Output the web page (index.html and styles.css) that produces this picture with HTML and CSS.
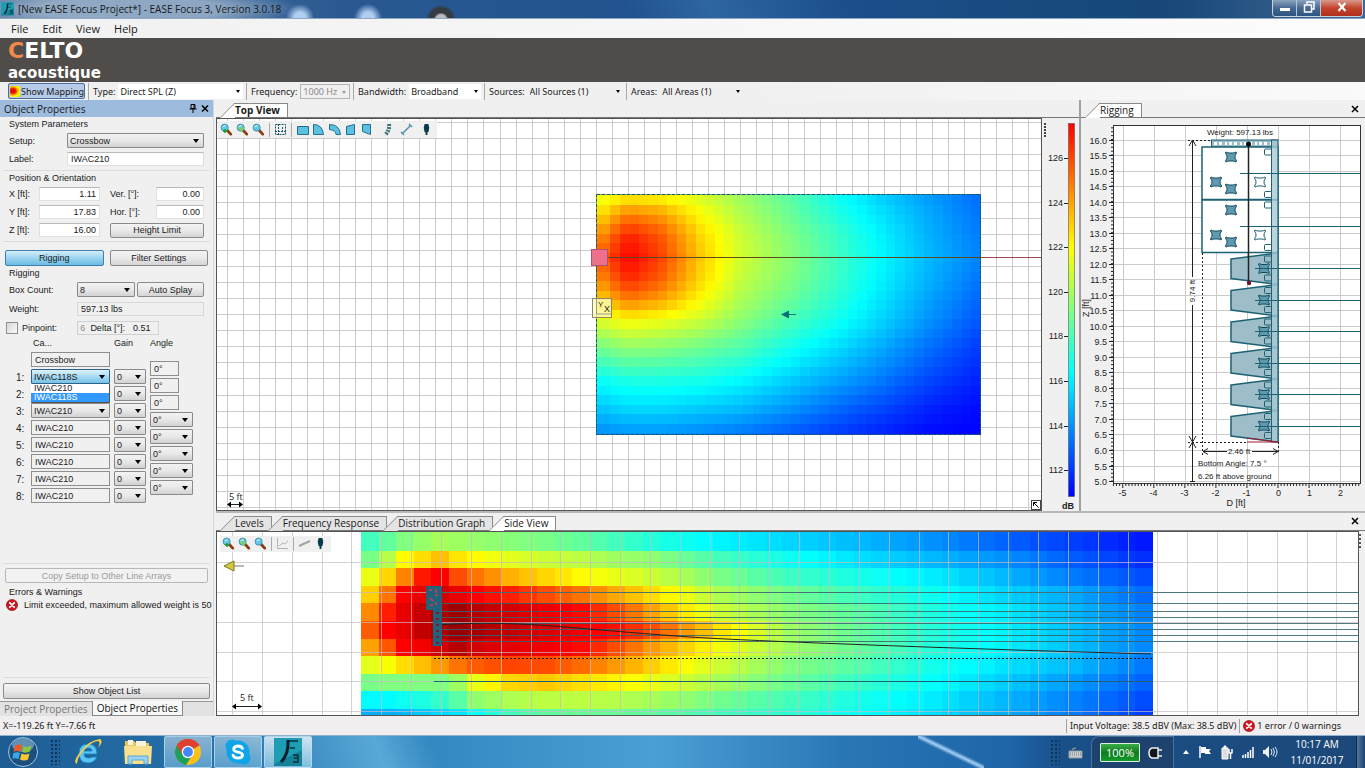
FILE: index.html
```html
<!DOCTYPE html>
<html lang="en">
<head>
  <meta charset="UTF-8">
  <title>[New EASE Focus Project*] - EASE Focus 3, Version 3.0.18</title>
  <link rel="stylesheet" href="styles.css">
</head>
<body>

  <!-- Shared icons -->
  <svg class="sprite" aria-hidden="true">
    <symbol id="mag" viewBox="0 0 14 14">
      <path d="M7.500 7.500l4 4.500" stroke="#8c3a12" stroke-width="3" stroke-linecap="round"/>
      <circle cx="5" cy="5" r="3.800" fill="#63c8e6" stroke="#3c8fa8"/>
      <path d="M3 4.500q1-2 3-1.500" stroke="#fff" fill="none"/>
    </symbol>
    <symbol id="error" viewBox="0 0 12 12">
      <circle cx="6" cy="6" r="5.600" fill="#cf1420" stroke="#8e0b12" stroke-width=".6"/>
      <path d="M3.800 3.800l4.400 4.400M8.200 3.800l-4.400 4.400" stroke="#fff" stroke-width="1.800" stroke-linecap="round"/>
    </symbol>
    <symbol id="ease" viewBox="0 0 28 28">
      <rect width="28" height="28" fill="#14839a"/>
      <path d="M0 0h28v12L0 26z" fill="#1f9db4"/>
      <path d="M14 2q1 14-7 22" stroke="#06212c" stroke-width="3" fill="none"/>
      <path d="M15 3h9M16 10h5M19 17h5v7h-5M20 20h4" stroke="#06303c" stroke-width="1.500" fill="none"/>
    </symbol>
    <symbol id="pin" viewBox="0 0 8 14">
      <path d="M2 1h4l1 4-1 5H5v3H3v-3H2L1 5z" fill="#073b4c"/>
    </symbol>
  </svg>

  <header class="titlebar">
    <svg class="app-icon"><use href="#ease"/></svg>
    <span class="app-title">[New EASE Focus Project*] - EASE Focus 3, Version 3.0.18</span>
    <div class="window-buttons">
      <button aria-label="Minimize"><svg width="12" height="12"><path d="M1 7h10v3H1z" fill="#fff"/></svg></button>
      <button aria-label="Restore"><svg width="12" height="12"><path d="M4 3V1h7v7H9M1.500 4h7v7h-7z" fill="none" stroke="#fff" stroke-width="1.500"/></svg></button>
      <button class="close" aria-label="Close"><svg width="12" height="12"><path d="M2.500 2l7 8M9.500 2l-7 8" stroke="#fff" stroke-width="2.200"/></svg></button>
    </div>
  </header>

  <nav class="menu">
    <a href="#">File</a>
    <a href="#">Edit</a>
    <a href="#">View</a>
    <a href="#">Help</a>
  </nav>

  <div class="banner">
    <div class="brand"><span class="brand-c">C</span>ELTO</div>
    <div class="brand-sub">acoustique</div>
  </div>

  <!-- Mapping toolbar -->
  <div class="toolbar">
    <button class="mapping-button"><span class="heat-swatch"></span>Show Mapping</button>
    <div class="tool-field type">
      <label for="type">Type:</label>
      <span class="picker"><select id="type"><option>Direct SPL (Z)</option></select></span>
    </div>
    <div class="tool-field frequency">
      <label for="frequency">Frequency:</label>
      <span class="picker off"><select id="frequency" disabled><option>1000 Hz</option></select></span>
    </div>
    <div class="tool-field bandwidth">
      <label for="bandwidth">Bandwidth:</label>
      <span class="picker"><select id="bandwidth"><option>Broadband</option></select></span>
    </div>
    <div class="tool-field sources">
      <label for="sources">Sources:</label>
      <span class="picker plain"><select id="sources"><option>All Sources (1)</option></select></span>
    </div>
    <div class="tool-field areas">
      <label for="areas">Areas:</label>
      <span class="picker plain"><select id="areas"><option>All Areas (1)</option></select></span>
    </div>
  </div>

  <main class="main">

    <!-- Object properties -->
    <aside class="side">
      <div class="side-head">
        <span>Object Properties</span>
        <button aria-label="Pin"><svg width="8" height="9"><path d="M2 .5h4v4H2zM5 1v4M.5 5h7M4 5v4" fill="none" stroke="#000"/></svg></button>
        <button aria-label="Close panel"><svg width="8" height="9"><path d="M1 1.500l6 6M7 1.500l-6 6" stroke="#000" stroke-width="1.500"/></svg></button>
      </div>

      <div class="props">
        <section class="group">
          <h2>System Parameters</h2>
          <div class="row tall">
            <label class="name-wide" for="setup">Setup:</label>
            <span class="combo grow"><select id="setup"><option>Crossbow</option></select></span>
          </div>
          <div class="row">
            <label class="name-wide" for="label">Label:</label>
            <input class="grow" id="label" type="text" value="IWAC210">
          </div>
        </section>

        <section class="group">
          <h2>Position &amp; Orientation</h2>
          <div class="row">
            <label class="name-short" for="x">X [ft]:</label>
            <input class="num" id="x" type="text" value="1.11">
            <label class="name-mid" for="ver">Ver. [°]:</label>
            <input class="num-small" id="ver" type="text" value="0.00">
          </div>
          <div class="row">
            <label class="name-short" for="y">Y [ft]:</label>
            <input class="num" id="y" type="text" value="17.83">
            <label class="name-mid" for="hor">Hor. [°]:</label>
            <input class="num-small" id="hor" type="text" value="0.00">
          </div>
          <div class="row">
            <label class="name-short" for="z">Z [ft]:</label>
            <input class="num" id="z" type="text" value="16.00">
            <button class="btn grow height-limit">Height Limit</button>
          </div>
        </section>

        <div class="mode-tabs">
          <button class="btn active">Rigging</button>
          <button class="btn">Filter Settings</button>
        </div>

        <section class="group rigging">
          <h2>Rigging</h2>
          <div class="row tall">
            <label class="name-rig" for="boxes">Box Count:</label>
            <span class="combo boxes"><select id="boxes"><option>8</option></select></span>
            <button class="btn grow">Auto Splay</button>
          </div>
          <div class="row tall">
            <label class="name-rig" for="weight">Weight:</label>
            <input class="grow flat" id="weight" type="text" value="597.13 lbs" readonly>
          </div>
          <div class="row tall pinpoint">
            <input id="pinpoint" type="checkbox">
            <label for="pinpoint">Pinpoint:</label>
            <div class="delta">
              <span class="dim">6</span>
              <label for="delta">Delta [°]:</label>
              <input id="delta" type="text" value="0.51" readonly>
            </div>
          </div>

          <div class="cabinets">
            <div class="cab-col cab-index">
              <span>1:</span><span>2:</span><span>3:</span><span>4:</span><span>5:</span><span>6:</span><span>7:</span><span>8:</span>
            </div>
            <div class="cab-col cab-type">
              <h3>Ca...</h3>
              <input type="text" value="Crossbow" aria-label="Frame" readonly>
              <span class="combo open"><select aria-label="Cabinet 1"><option>IWAC118S</option></select></span>
              <ul class="cab-list">
                <li>IWAC210</li>
                <li class="picked">IWAC118S</li>
              </ul>
              <span class="combo"><select aria-label="Cabinet 2"><option></option></select></span>
              <span class="combo"><select aria-label="Cabinet 3"><option>IWAC210</option></select></span>
              <input type="text" value="IWAC210" aria-label="Cabinet 4" readonly>
              <input type="text" value="IWAC210" aria-label="Cabinet 5" readonly>
              <input type="text" value="IWAC210" aria-label="Cabinet 6" readonly>
              <input type="text" value="IWAC210" aria-label="Cabinet 7" readonly>
              <input type="text" value="IWAC210" aria-label="Cabinet 8" readonly>
            </div>
            <div class="cab-col cab-gain">
              <h3>Gain</h3>
              <span class="combo"><select aria-label="Gain 1"><option>0</option></select></span>
              <span class="combo"><select aria-label="Gain 2"><option>0</option></select></span>
              <span class="combo"><select aria-label="Gain 3"><option>0</option></select></span>
              <span class="combo"><select aria-label="Gain 4"><option>0</option></select></span>
              <span class="combo"><select aria-label="Gain 5"><option>0</option></select></span>
              <span class="combo"><select aria-label="Gain 6"><option>0</option></select></span>
              <span class="combo"><select aria-label="Gain 7"><option>0</option></select></span>
              <span class="combo"><select aria-label="Gain 8"><option>0</option></select></span>
            </div>
            <div class="cab-col cab-angle">
              <h3>Angle</h3>
              <input type="text" value="0°" aria-label="Angle 1" readonly>
              <input type="text" value="0°" aria-label="Angle 2" readonly>
              <input type="text" value="0°" aria-label="Angle 3" readonly>
              <span class="combo"><select aria-label="Angle 4"><option>0°</option></select></span>
              <span class="combo"><select aria-label="Angle 5"><option>0°</option></select></span>
              <span class="combo"><select aria-label="Angle 6"><option>0°</option></select></span>
              <span class="combo"><select aria-label="Angle 7"><option>0°</option></select></span>
              <span class="combo"><select aria-label="Angle 8"><option>0°</option></select></span>
            </div>
          </div>
        </section>

        <button class="btn copy" disabled>Copy Setup to Other Line Arrays</button>

        <section class="group errors">
          <h2>Errors &amp; Warnings</h2>
          <p><svg width="12" height="12"><use href="#error"/></svg><span>Limit exceeded, maximum allowed weight is 503</span></p>
        </section>
      </div>

      <button class="btn object-list">Show Object List</button>
      <div class="side-tabs">
        <a href="#">Project Properties</a>
        <a class="active" href="#">Object Properties</a>
      </div>
    </aside>

    <div class="views">
      <!-- Top view -->
      <section class="view top-view">
        <div class="tabs"><a class="tab active bold" href="#">Top View</a></div>
        <div class="view-body">
          <div class="plot">
            <svg id="top-plot" class="plot-svg"></svg>
            <div class="plot-tools">
              <button aria-label="Zoom in"><svg width="13" height="13"><use href="#mag"/><path d="M3 8h4M5 6v4" stroke="#1e9b2e" stroke-width="1.500"/></svg></button>
              <button aria-label="Zoom window"><svg width="13" height="13"><use href="#mag"/><path d="M2 5q3-3 6 1l-3 3z" fill="#7ad06a"/></svg></button>
              <button aria-label="Zoom out"><svg width="13" height="13"><use href="#mag"/></svg></button>
              <i class="sep"></i>
              <button aria-label="Show grid"><svg width="13" height="13"><path d="M1.500 1.500h10v10h-10zM4.500 1v11M1 8.500h11M8.500 4v4" fill="none" stroke="#14566a" stroke-dasharray="2 1"/></svg></button>
              <i class="sep"></i>
              <button aria-label="Rectangle area"><svg width="13" height="13"><path d="M1.500 3.500h11v8h-11z" class="area"/></svg></button>
              <button aria-label="Arc area"><svg width="13" height="13"><path d="M1.500 1.500q9 0 10 10h-10z" class="area"/></svg></button>
              <button aria-label="Ring area"><svg width="13" height="13"><path d="M1.500 1.500q10 0 11 10H8q0-4-6.500-5z" class="area"/></svg></button>
              <button aria-label="Left trapezoid"><svg width="13" height="13"><path d="M2.500 3.500l8-2v10h-8z" class="area"/></svg></button>
              <button aria-label="Right trapezoid"><svg width="13" height="13"><path d="M2.500 1.500h8v10l-8-3z" class="area"/></svg></button>
              <button class="gap" aria-label="Line array"><svg width="13" height="13"><path d="M9 1q1 6-4 11" stroke="#43727e" stroke-width="4" fill="none" stroke-dasharray="2 1"/></svg></button>
              <button class="gap" aria-label="Measure"><svg width="13" height="13"><path d="M2 11l9-9M1 9l3 3M9 1l3 3" stroke="#4f8fac" stroke-width="1.500"/></svg></button>
              <button class="gap" aria-label="Probe"><svg width="13" height="13"><use href="#pin"/></svg></button>
            </div>
            <button class="corner" aria-label="Resize"><svg width="8" height="8"><path d="M1.500 5V1.500H5M1.500 1.500l5 5" stroke="#000" fill="none"/></svg></button>
          </div>
          <svg id="scale" class="scale"></svg>
        </div>
      </section>

      <!-- Rigging diagram -->
      <section class="view rig-view">
        <div class="tabs">
          <a class="tab active" href="#">Rigging</a>
          <button class="tab-close" aria-label="Close rigging"><svg width="8" height="8"><path d="M1 1l6 6M7 1l-6 6" stroke="#000" stroke-width="1.500"/></svg></button>
        </div>
        <svg id="rig-plot" class="plot-svg"></svg>
      </section>

      <!-- Side view -->
      <section class="view side-view">
        <div class="tabs">
          <a class="tab" href="#">Levels</a>
          <a class="tab" href="#">Frequency Response</a>
          <a class="tab" href="#">Distribution Graph</a>
          <a class="tab active" href="#">Side View</a>
          <button class="tab-close" aria-label="Close side view"><svg width="8" height="8"><path d="M1 1l6 6M7 1l-6 6" stroke="#000" stroke-width="1.500"/></svg></button>
        </div>
        <div class="view-body">
          <div class="plot">
            <svg id="side-plot" class="plot-svg"></svg>
            <div class="plot-tools lower">
              <button aria-label="Zoom in"><svg width="13" height="13"><use href="#mag"/><path d="M3 8h4M5 6v4" stroke="#1e9b2e" stroke-width="1.500"/></svg></button>
              <button aria-label="Zoom window"><svg width="13" height="13"><use href="#mag"/><path d="M2 5q3-3 6 1l-3 3z" fill="#7ad06a"/></svg></button>
              <button aria-label="Zoom out"><svg width="13" height="13"><use href="#mag"/></svg></button>
              <i class="sep"></i>
              <button aria-label="Axes"><svg width="13" height="13"><path d="M1.500 1v10.500H12M3 9l4-3 2 1 3-3" stroke="#b4b4b4" fill="none"/></svg></button>
              <i class="sep"></i>
              <button aria-label="Measure"><svg width="13" height="13"><path d="M1 9l11-5" stroke="#a4a4a4" stroke-width="2"/></svg></button>
              <button aria-label="Probe"><svg width="13" height="13"><use href="#pin"/></svg></button>
            </div>
          </div>
          <i class="drag-dots"></i>
        </div>
      </section>
    </div>
  </main>

  <footer class="status">
    <span class="coords">X=-119.26 ft Y=-7.66 ft</span>
    <span class="status-cell">Input Voltage: 38.5 dBV (Max: 38.5 dBV)</span>
    <span class="status-cell"><svg width="12" height="12"><use href="#error"/></svg>1 error / 0 warnings</span>
  </footer>

  <!-- Windows taskbar -->
  <div class="taskbar">
    <button class="start" aria-label="Start">
      <svg width="32" height="32" viewBox="0 0 32 32">
        <circle cx="16" cy="16" r="14.500" fill="#1c4f7c" stroke="#9cc6e4"/>
        <ellipse cx="16" cy="9" rx="11" ry="7" fill="#8fb9d8" opacity=".6"/>
        <path d="M8 10q4-2.500 7-.5l-1.500 6Q10 14 6.500 16z" fill="#ee5a24"/>
        <path d="M16.500 10q4 2 8-.5l-1.500 6q-4 2-8 .5z" fill="#8cc63e"/>
        <path d="M6 17.500q4-2 7-.5l-1.500 6Q8 21.500 5.500 23z" fill="#38a9e8"/>
        <path d="M14.500 17.500q4 2 8 0l-1.500 6q-4 2-8 0z" fill="#fcc62d"/>
      </svg>
    </button>
    <i class="grip"></i>
    <button class="task flat-task" aria-label="Internet Explorer">
      <svg width="30" height="30" viewBox="0 0 30 30">
        <path d="M24 20q-3 6-9 6-9 0-9-10 0-9 9-9 9 0 9 10H11q0 4 4 4 3 0 4-1zM11 14h8q0-3-4-3t-4 3z" fill="#5cc5f4" stroke="#1886c8" fill-rule="evenodd"/>
        <path d="M4 27q-5-2 4-13T27 2q4 2-2 9 3-6 0-7-5 0-13 8T4 27z" fill="#f6cf3e"/>
      </svg>
    </button>
    <button class="task flat-task" aria-label="Explorer">
      <svg width="30" height="28" viewBox="0 0 30 28">
        <path d="M2 3h9l2 2h13v20H2z" fill="#e8c65a"/>
        <path d="M5 2h5v5H5zM13 3h10v5H13z" fill="#f8f3df"/>
        <path d="M1 8h28l-1 18H2z" fill="#f8e08c"/>
        <path d="M5 26v-8h20v8h-4v-4H9v4z" fill="#9bd2f0" stroke="#5fa7d2"/>
      </svg>
    </button>
    <button class="task" aria-label="Chrome">
      <svg width="28" height="28" viewBox="0 0 28 28">
        <circle cx="14" cy="14" r="13" fill="#fbc116"/>
        <path d="M14 14L2.700 7.500A13 13 0 0 1 25.300 7.500z" fill="#de4132"/>
        <path d="M14 14L2.700 7.500A13 13 0 0 0 12 26.900l6-9z" fill="#1da05c"/>
        <path d="M14 8h11.500l-.2-.5A13 13 0 0 0 2.700 7.500l5.800 9.500z" fill="#de4132"/>
        <circle cx="14" cy="14" r="6.200" fill="#fff"/>
        <circle cx="14" cy="14" r="4.900" fill="#4587f3"/>
      </svg>
    </button>
    <button class="task" aria-label="Skype">
      <svg width="28" height="28" viewBox="0 0 28 28">
        <circle cx="14" cy="14" r="11.500" fill="#0ea5e6"/>
        <circle cx="8" cy="8" r="6.500" fill="#0ea5e6"/>
        <circle cx="20" cy="20" r="6.500" fill="#0ea5e6"/>
        <path d="M18.500 10.500q-1-2.500-4.500-2.500t-4.300 2.600q-.3 2.700 4.300 3.500t4.600 3.200q-.5 2.900-4.600 2.900t-5-3" fill="none" stroke="#fff" stroke-width="2.800" stroke-linecap="round"/>
      </svg>
    </button>
    <button class="task current" aria-label="EASE Focus">
      <svg width="28" height="28"><use href="#ease"/></svg>
    </button>

    <div class="tray">
      <i class="grip"></i>
      <svg width="15" height="13"><path d="M1 5h13v7H1zM4 4q0-2 4-2" fill="#c9ccce" stroke="#8f9aa3"/><path d="M2 7h11M2 9h11" stroke="#77828b" stroke-dasharray="1 1"/></svg>
      <span class="tray-power">
        <span class="battery">100%</span>
        <svg width="16" height="14"><path d="M5 2h6v10H5Q2 11 2 7t3-5zM11 4h4M11 10h4" fill="#10161c" stroke="#eee" stroke-width="1.500"/></svg>
      </span>
      <svg width="8" height="6"><path d="M4 1l3 4H1z" fill="#fff"/></svg>
      <svg width="14" height="14"><path d="M2 1v12" stroke="#fff" stroke-width="1.500"/><path d="M3 2h5v2h5l-2 2 2 3H7V8H3z" fill="#fff"/></svg>
      <svg width="13" height="15"><path d="M2 3h6v11H2zM4 1h2v2H4z" fill="#ddd" stroke="#fff"/><path d="M9 4v4M12 4v4M8.500 8h4M10.500 8v6" stroke="#fff" stroke-width="1.500"/></svg>
      <svg width="13" height="13"><path d="M2 12V9M4.500 12V8M7 12V6M9.500 12V4M12 12V1" stroke="#fff" stroke-width="1.500"/></svg>
      <svg width="16" height="14"><path d="M1 5h2l4-4v12L3 9H1z" fill="#eee"/><path d="M9 4q2 3 0 6M11 3q3 4 0 8M13 2q4 5 0 10" stroke="#dfe8f0" fill="none"/></svg>
      <time class="clock">10:17 AM<br>11/01/2017</time>
      <button class="show-desktop" aria-label="Show desktop"></button>
    </div>
  </div>

  <script src="plots.js"></script>
</body>
</html>
```

FILE: styles.css
```css
* {
  box-sizing: border-box;
}

body {
  margin: 0;
  height: 100vh;
  display: flex;
  flex-direction: column;
  overflow: hidden;
  background: #f0f0f0;
  color: #1a1a1a;
  font-family: "Liberation Sans", Arial, sans-serif;
  font-size: 9px;
}

button, input, select {
  margin: 0;
  padding: 0;
  border: none;
  background: none;
  color: inherit;
  font: inherit;
}

a {
  color: inherit;
  text-decoration: none;
}

h2, h3, p, ul {
  margin: 0;
  padding: 0;
  font-size: inherit;
  font-weight: normal;
  list-style: none;
}

.sprite {
  position: absolute;
  width: 0;
  height: 0;
}

/* Title bar */
.titlebar {
  flex: none;
  display: flex;
  align-items: center;
  gap: 4px;
  height: 19px;
  padding-left: 1px;
  border-bottom: 1px solid #8fa9c4;
  background:
    radial-gradient(ellipse 170px 22px at 130px 9px, rgba(160, 182, 206, .8) 55%, transparent),
    radial-gradient(ellipse 14px 14px at 300px 18px, rgba(190, 220, 250, .9) 40%, transparent),
    radial-gradient(ellipse 14px 14px at 368px 18px, rgba(190, 220, 250, .9) 40%, transparent),
    radial-gradient(circle 15px at 441px 20px, #b9bcc0 35%, #353b42 50%, #353b42 80%, transparent),
    linear-gradient(60deg, transparent 46%, rgba(80, 150, 205, .3) 52%, transparent 62%),
    linear-gradient(90deg, #5b7b9f, #2a5991 25%, #1c4f8c 60%, #174778 85%, #3d6690);
}

.app-icon {
  width: 13px;
  height: 16px;
}

.app-title {
  flex: 1;
  font: 10px "Open Sans", sans-serif;
}

.window-buttons {
  display: flex;
  align-self: flex-start;
  margin-right: 2px;
  border: 1px solid #c6d3e0;
  border-top: none;
  border-radius: 0 0 4px 4px;
  overflow: hidden;
}

.window-buttons button {
  width: 24px;
  height: 16px;
  border-right: 1px solid #b6c4d4;
  background: linear-gradient(#8ba3be, #476991 50%, #2c5482);
}

.window-buttons .close {
  width: 41px;
  border: none;
  background: linear-gradient(#d99a8c, #c4432c 50%, #b0301c);
}

/* Menu */
.menu {
  flex: none;
  display: flex;
  align-items: center;
  gap: 14px;
  height: 19px;
  padding-left: 11px;
  background: linear-gradient(90deg, #f1f1f1, #fcfcfc);
  font: 11px "Open Sans", sans-serif;
}

/* Banner */
.banner {
  flex: none;
  padding-left: 8px;
  background: #504c49;
  color: #fff;
  font-family: "DejaVu Sans", sans-serif;
  font-weight: bold;
}

.brand {
  font-size: 22px;
  line-height: 26px;
}

.brand-c {
  color: #f08a4b;
}

.brand-sub {
  font-size: 15px;
  line-height: 18px;
}

/* Mapping toolbar */
.toolbar {
  flex: none;
  display: flex;
  align-items: center;
  height: 18px;
  padding-left: 8px;
  background: linear-gradient(90deg, #f0f0f0 55%, #fafafa);
  font-family: "Noto Sans", sans-serif;
}

.mapping-button {
  display: flex;
  align-items: center;
  gap: 1px;
  width: 77px;
  height: 16px;
  padding-left: 1px;
  border: 1px solid #4a6f9c;
  border-radius: 2px;
  background: #b5cbe8;
  white-space: nowrap;
}

.heat-swatch {
  width: 11px;
  height: 11px;
  background: radial-gradient(ellipse at 30% 45%, #e01000 25%, #fb0 50%, #ff0 70%, #a4d800);
}

.tool-field {
  display: flex;
  align-items: center;
  gap: 3px;
  height: 17px;
  margin-left: 3px;
  padding-left: 4px;
  border-left: 1px solid #a8a8a8;
}

.tool-field label {
  flex: none;
}

.type { width: 155px; }
.frequency { width: 104px; }
.bandwidth { width: 128px; }
.sources { width: 139px; }
.areas { width: 117px; }

.picker {
  position: relative;
  flex: 1;
  height: 15px;
  background: #fff;
}

.picker.plain {
  background: none;
}

.picker.off {
  border: 1px solid #b4b4b4;
  background: #f0f0f0;
  color: #8a8a8a;
}

.picker select {
  display: block;
  width: 100%;
  height: 100%;
  padding-left: 2px;
  appearance: none;
  opacity: 1;
}

.picker::after,
.combo::after {
  content: "";
  position: absolute;
  right: 3px;
  top: 6px;
  border: 2px solid transparent;
  border-top: 3px solid #000;
  pointer-events: none;
}

.picker.off::after {
  border-top-color: #999;
}

/* Main area */
.main {
  flex: 1;
  display: flex;
  min-height: 0;
}

.side {
  flex: none;
  display: flex;
  flex-direction: column;
  width: 214px;
  border-right: 1px solid #cdd9e6;
}

.side-head {
  flex: none;
  display: flex;
  align-items: center;
  gap: 4px;
  height: 17px;
  padding: 0 4px;
  background: #9dbbdd;
  font: 10px "Open Sans", sans-serif;
}

.side-head span {
  flex: 1;
}

.side-head button {
  line-height: 0;
}

.props {
  flex: 1;
  display: flex;
  flex-direction: column;
  min-height: 0;
  padding: 0 3px;
}

.group {
  padding: 0 6px 2px;
  border-bottom: 1px solid #dcdcdc;
}

.group h2 {
  line-height: 14px;
}

.row {
  display: flex;
  align-items: center;
  height: 18px;
}

.row.tall {
  height: 19px;
}

.grow {
  flex: 1;
  min-width: 0;
}

.name-wide { width: 58px; }
.name-short { width: 30px; }
.name-mid { width: 56px; padding-left: 10px; white-space: nowrap; }
.name-rig { width: 68px; }

.side input[type="text"] {
  height: 14px;
  padding: 0 3px;
  border: 1px solid #e0e0e0;
  border-top-color: #b8b8b8;
  background: #fff;
}

.side .num,
.side .num-small {
  width: 61px;
  text-align: right;
}

.side .num-small {
  width: 48px;
}

.side input.flat {
  border-color: #d8d8d8;
  background: none;
}

.btn {
  height: 15px;
  border: 1px solid #8a8a8a;
  border-radius: 2px;
  background: linear-gradient(#f4f4f4, #e9e9e9 50%, #d4d4d4);
}

.height-limit {
  margin-left: 10px;
}

.combo {
  position: relative;
  display: block;
  height: 15px;
  border: 1px solid #8a8a8a;
  border-radius: 1px;
  background: linear-gradient(#f2f2f2, #e8e8e8 50%, #d2d2d2);
}

.combo::after {
  right: 4px;
  top: 5px;
  border-width: 4px 3px;
  border-top: 4px solid #000;
  border-bottom: none;
}

.combo select {
  display: block;
  width: 100%;
  height: 100%;
  padding-left: 2px;
  appearance: none;
}

.combo.boxes {
  width: 58px;
  margin-right: 2px;
}

.mode-tabs {
  display: flex;
  gap: 6px;
  padding: 8px 2px 0;
}

.mode-tabs .btn {
  flex: 1;
  height: 16px;
}

.mode-tabs .active {
  border-color: #3c7fb1;
  background: linear-gradient(#d6eefa, #9bd4f0 50%, #6bbbe2);
}

.group.rigging {
  flex: 1;
}

.pinpoint input[type="checkbox"] {
  width: 12px;
  height: 12px;
  margin-left: -3px;
  margin-right: 4px;
  appearance: none;
  border: 1px solid #8e8f8f;
  background: linear-gradient(135deg, #d8d8d8, #fafafa);
}

.delta {
  display: flex;
  align-items: center;
  gap: 5px;
  height: 14px;
  margin-left: auto;
  margin-right: 45px;
  padding-left: 2px;
  border: 1px solid #d0d0d0;
}

.delta .dim {
  color: #8a8a8a;
}

.side .delta input {
  width: 28px;
  height: 12px;
  border: none;
  background: none;
}

/* Cabinet list */
.cabinets {
  display: flex;
  align-items: flex-start;
  gap: 4px;
  padding: 1px 0 0 7px;
}

.cab-col {
  position: relative;
  display: flex;
  flex-direction: column;
  gap: 2px;
}

.cab-col h3 {
  height: 12px;
  padding-left: 2px;
}

.cab-index {
  width: 11px;
  padding-top: 31px;
  gap: 0;
  font-size: 10px;
  line-height: 17px;
}

.cab-type {
  width: 79px;
}

.side .cab-col input {
  width: 100%;
  height: 15px;
  border-color: #8f8f8f;
  background: #f0f0f0;
}

.cab-gain {
  width: 32px;
}

.cab-gain h3 {
  margin-bottom: 17px;
  padding: 0;
}

.cab-angle {
  width: 43px;
}

.cab-angle h3 {
  margin-bottom: 9px;
  padding: 0;
}

.side .cab-angle input {
  width: 29px;
}

.combo.open {
  border-color: #2c6289;
  background: linear-gradient(#e0f2fb, #a6daf3 50%, #78c2e6);
}

.cab-list {
  position: absolute;
  z-index: 2;
  top: 46px;
  left: 0;
  width: 79px;
  border-right: 1px solid #555;
  border-bottom: 1px solid #555;
  background: #fff;
  line-height: 9px;
}

.cab-list li {
  padding-left: 3px;
}

.cab-list .picked {
  background: #3399ff;
  color: #fff;
}

.copy {
  flex: none;
  margin: 4px 2px 2px;
  border-color: #b8b8b8;
  background: #f2f2f2;
  color: #9a9a9a;
}

.group.errors {
  flex: none;
  height: 93px;
}

.errors p {
  display: flex;
  align-items: center;
  gap: 6px;
  margin: 0 -8px 0 -3px;
  white-space: nowrap;
  overflow: hidden;
}

.errors svg {
  flex: none;
}

.object-list {
  flex: none;
  margin: 5px 3px 2px;
  height: 16px;
}

.side-tabs {
  flex: none;
  display: flex;
  height: 15px;
  border-top: 1px solid #999;
  background: #e2e2e2;
  font: 10px "Open Sans", sans-serif;
}

.side-tabs a {
  padding: 0 4px;
  color: #777;
}

.side-tabs .active {
  margin-top: -1px;
  border: 1px solid #888;
  border-top: none;
  background: #f8f8f8;
  color: #111;
}

/* Views */
.views {
  flex: 1;
  display: grid;
  grid-template-columns: 1fr 286px;
  grid-template-rows: 2fr 1fr;
  min-width: 0;
  padding-left: 2px;
}

.view {
  display: flex;
  flex-direction: column;
  min-width: 0;
  min-height: 0;
}

.rig-view {
  border-left: 2px solid #9f9f9f;
}

.side-view {
  grid-column: 1 / 3;
  border-top: 2px solid #b8b8b8;
}

.tabs {
  flex: none;
  display: flex;
  align-items: flex-end;
  height: 18px;
  padding-left: 4px;
  border-bottom: 1px solid #777;
}

.tab {
  position: relative;
  isolation: isolate;
  height: 14px;
  margin-left: 14px;
  padding: 0 7px 0 1px;
  border: 1px solid #8a8a8a;
  border-width: 1px 1px 0 0;
  background: #e4e4e4;
  font: 10px/13px "Open Sans", sans-serif;
}

.tab + .tab {
  margin-left: 10px;
}

/* slanted left edge */
.tab::before {
  content: "";
  position: absolute;
  z-index: -1;
  top: -1px;
  left: -7px;
  width: 14px;
  height: 14px;
  border: 1px solid #8a8a8a;
  border-width: 1px 0 0 1px;
  background: inherit;
  transform: skewX(-45deg);
}

.tab.active,
.tab.active::before {
  background: #fff;
}

.tab.bold {
  font-weight: bold;
}

.tab-close {
  align-self: center;
  margin-left: auto;
  margin-right: 6px;
  line-height: 0;
}

.view-body {
  flex: 1;
  display: flex;
  min-height: 0;
}

.plot {
  position: relative;
  flex: 1;
  min-width: 0;
  border: 1px solid #555;
  background: #fff;
}

.plot-svg {
  display: block;
  width: 100%;
  height: 100%;
}

.rig-view .plot-svg {
  flex: 1;
  min-height: 0;
}

.scale {
  width: 37px;
  height: 100%;
}

.plot-tools {
  position: absolute;
  top: 2px;
  left: 1px;
  display: flex;
  align-items: center;
  gap: 3px;
  height: 17px;
  padding: 0 4px 0 2px;
  background: #f0f0f0;
}

.plot-tools.lower {
  top: 4px;
  left: 3px;
  height: 16px;
}

.plot-tools button {
  line-height: 0;
}

.plot-tools .gap {
  margin-left: 4px;
}

.plot-tools .sep {
  width: 1px;
  height: 14px;
  margin: 0 1px;
  background: #aaa;
}

.area {
  fill: #5cc0e2;
  stroke: #22708c;
}

.corner {
  position: absolute;
  right: 0;
  bottom: 0;
  width: 10px;
  height: 10px;
  border: 1px solid #444;
  background: #fff;
  line-height: 0;
}

.drag-dots {
  width: 6px;
  height: 14px;
  margin-top: 3px;
  border-left: 2px dotted #555;
}

/* Status bar */
.status {
  flex: none;
  display: flex;
  align-items: center;
  height: 19px;
  background: #f0eeee;
  font-family: "Noto Sans", sans-serif;
}

.coords {
  flex: 1;
  padding-left: 3px;
}

.status-cell {
  display: flex;
  align-items: center;
  gap: 2px;
  height: 14px;
  padding: 0 3px;
  border-left: 1px solid #a0a0a0;
}

.status-cell:last-child {
  padding-right: 24px;
}

/* Taskbar */
.taskbar {
  flex: none;
  display: flex;
  align-items: center;
  height: 33px;
  border-top: 1px solid #8fb0ce;
  background:
    linear-gradient(to top right, transparent 44%, rgba(190, 225, 255, .85) 50%, transparent 56%) 918px 0 / 66px 100% no-repeat,
    linear-gradient(70deg, transparent 18%, rgba(130, 205, 240, .5) 28%, transparent 32%),
    linear-gradient(90deg, #1d5c93, #2f83bd 28%, #4aa0d4 48%, #2a76b5 62%, #1d65a8 74%, #1a4f88 78%, #1c4878);
}

.start {
  margin: 0 11px 0 7px;
  line-height: 0;
}

.grip {
  width: 10px;
  height: 26px;
  background: radial-gradient(circle, #0e3658 1px, transparent 1px) 0 0 / 4px 4px;
}

.task {
  display: flex;
  align-items: center;
  justify-content: center;
  width: 48px;
  height: 32px;
  margin-right: 2px;
  border: 1px solid rgba(190, 225, 245, .7);
  border-radius: 2px;
  background: linear-gradient(rgba(255, 255, 255, .45), rgba(150, 215, 245, .45));
}

.flat-task {
  border-color: transparent;
  background: none;
}

.grip + .flat-task {
  margin-left: 4px;
}

.current {
  background: linear-gradient(rgba(255, 255, 255, .75), rgba(170, 225, 245, .6));
}

.tray {
  display: flex;
  align-items: center;
  align-self: stretch;
  gap: 8px;
  margin-left: auto;
  color: #fff;
}

.tray-power {
  display: flex;
  align-items: center;
  align-self: stretch;
  gap: 7px;
  padding: 0 10px 0 8px;
  border: 1px solid #48719c;
  border-bottom: none;
  border-radius: 8px 0 0 0;
  background: #1d426d;
}

.battery {
  width: 40px;
  border: 1px solid #dcefdc;
  border-radius: 1px;
  background: linear-gradient(#3aae48, #0d7d20 50%, #149a2a);
  font: 11px/17px "Open Sans", sans-serif;
  text-align: center;
}

.clock {
  width: 62px;
  font: 10px/16px "Open Sans", sans-serif;
  text-align: center;
}

.show-desktop {
  width: 9px;
  height: 32px;
  border-left: 1px solid #0d2a48;
  background: linear-gradient(90deg, #54769c, #1d426d);
}

/* Drawings */
svg text {
  font: 9px "Liberation Sans", sans-serif;
  fill: #222;
}

svg .note {
  font-size: 8px;
}

svg .strong {
  font-weight: bold;
}

svg .small {
  font: 9px "Open Sans", sans-serif;
}

.grid-line { stroke: #cbcbcb; }
.grid-rose { stroke: #c6bcc2; stroke-opacity: .7; }
.ink { stroke: #222; fill: none; }
.dash { stroke: #222; fill: none; stroke-dasharray: 2 2; }
.teal { stroke: #1d6273; fill: none; }
.box-fill { fill: #9dbdc9; stroke: #1d6273; }
.open-box { fill: #fff; stroke: #1d6273; }
.driver { fill: #5f9bb0; stroke: #14495a; }
.driver-open { fill: #fff; stroke: #1d6273; }
```

FILE: plots.js
```javascript
// colour scale: 0 = blue, 1/3 = cyan, 2/3 = yellow, 1 = red, above = dark red
function heatColor(t) {
  const stops = [[0, 0, 255], [0, 255, 255], [255, 255, 0], [255, 0, 0], [110, 0, 0]];
  const p = Math.max(0, Math.min(3.999, t * 3));
  const i = Math.floor(p);
  const f = p - i;
  const c = stops[i].map((v, k) => Math.round(v + (stops[i + 1][k] - v) * f));
  return `rgb(${c.join(',')})`;
}

function lerpAt(keys, values, k) {
  let i = 0;
  while (i < keys.length - 2 && k > keys[i + 1]) i++;
  const f = Math.max(0, Math.min(1, (k - keys[i]) / (keys[i + 1] - keys[i])));
  return values[i] + (values[i + 1] - values[i]) * f;
}

function line(x1, y1, x2, y2, cls) {
  return `<path d="M${x1} ${y1}L${x2} ${y2}" class="${cls}"/>`;
}

function gridLines(x0, y0, step, w, h, cls) {
  let s = '';
  for (let x = x0; x < w; x += step) s += line(Math.round(x) + .5, 0, Math.round(x) + .5, h, cls);
  for (let y = y0; y < h; y += step) s += line(0, Math.round(y) + .5, w, Math.round(y) + .5, cls);
  return s;
}

function cell(x, y, w, h, t) {
  return `<rect x="${x}" y="${y}" width="${w}" height="${h}" fill="${heatColor(t)}"/>`;
}

// ---- top view ----
const topX = [0, 32, 64, 104, 144, 194, 244, 284, 334, 385];
const topY = [0, 21, 41, 63, 86, 106, 126, 156, 186, 216, 241];
const topLevels = [
  [.62, .67, .66, .61, .54, .45, .34, .27, .20, .14],
  [.70, .84, .80, .67, .57, .47, .37, .30, .22, .15],
  [.79, .96, .89, .72, .60, .50, .40, .32, .23, .16],
  [.86, 1.0, .92, .74, .61, .51, .41, .33, .24, .17],
  [.80, .95, .88, .72, .59, .50, .40, .32, .23, .15],
  [.71, .84, .79, .67, .56, .47, .38, .30, .21, .13],
  [.62, .67, .65, .60, .52, .43, .35, .28, .19, .11],
  [.47, .51, .50, .47, .43, .35, .28, .22, .14, .07],
  [.34, .37, .37, .36, .33, .27, .21, .16, .09, .04],
  [.25, .28, .28, .26, .24, .19, .13, .09, .04, .01],
  [.18, .19, .19, .17, .15, .11, .07, .04, .01, 0]
];

function edges(first, step, end) {
  const list = [0];
  for (let v = first; v < end; v += step) list.push(Math.round(v));
  list.push(end);
  return list;
}

function drawTop() {
  let s = gridLines(10, 3, 16.03, 3000, 2000, 'grid-line');
  const xs = edges(14, 9.5, 385);
  const ys = edges(11, 9.5, 241);
  s += '<g shape-rendering="crispEdges">';
  for (let r = 0; r < ys.length - 1; r++) {
    for (let c = 0; c < xs.length - 1; c++) {
      const mx = (xs[c] + xs[c + 1]) / 2;
      const my = (ys[r] + ys[r + 1]) / 2;
      const column = topLevels.map(row => lerpAt(topX, row, mx));
      s += cell(379 + xs[c], 75 + ys[r], xs[c + 1] - xs[c], ys[r + 1] - ys[r], lerpAt(topY, column, my));
    }
  }
  s += '</g><rect x="379.5" y="75.5" width="384" height="240" fill="none" stroke="#145a78" stroke-dasharray="4 1"/>';
  s += '<path d="M391 138.500H764" stroke="#5a4a20"/><path d="M764 138.500H3000" stroke="#9a4555"/>';
  s += '<rect x="374.5" y="130.500" width="16" height="16" fill="#f0708c" stroke="#b05070"/>';
  s += '<path d="M376 139h6v6h-6z" fill="none" stroke="#c88a80" stroke-dasharray="1 1"/>';
  s += '<rect x="375.5" y="179.500" width="19" height="19" fill="#fff8c0" fill-opacity=".75" stroke="#8a8a60"/>';
  s += '<path d="M379.500 180v15h15" fill="none" stroke="#999"/><text x="381" y="188" class="note">Y</text><text x="387" y="193">X</text>';
  s += '<path d="M564 195.500l8-4v8z" fill="#067078"/><path d="M572 195.500h7" stroke="#067078"/>';
  s += '<text x="12" y="381" class="small">5 ft</text>';
  s += '<path d="M12 385.500h13" class="ink"/><path d="M10 385.500l4-3v6zM26 385.500l-4-3v6z"/>';
  document.getElementById('top-plot').innerHTML = s;
}

function drawScale() {
  let s = '<defs><linearGradient id="jet" x2="0" y2="1"><stop stop-color="red"/><stop offset=".333" stop-color="#ff0"/><stop offset=".667" stop-color="#0ff"/><stop offset="1" stop-color="#00f"/></linearGradient></defs>';
  s += '<path d="M3 5v14" stroke="#444" stroke-width="2" stroke-dasharray="2 1"/>';
  s += '<rect x="26.500" y="5.500" width="6" height="373" fill="url(#jet)" stroke="#444" stroke-width=".5"/>';
  for (let v = 126, y = 40; v >= 112; v -= 2, y += 44.6) {
    s += `<text x="21" y="${Math.round(y) + 3}" text-anchor="end">${v}</text>`;
    s += line(22, Math.round(y) + .5, 26, Math.round(y) + .5, 'ink');
  }
  s += '<text x="20" y="391" class="strong">dB</text>';
  document.getElementById('scale').innerHTML = s;
}

// ---- side view ----
const sideX = [0, 1, 2, 3, 4, 5, 6, 8, 10, 12, 14, 16, 18, 20, 24, 28, 32, 36, 40, 44];
const sideLevels = [
  [.42, .46, .50, .53, .55, .54, .53, .51, .49, .46, .42, .38, .35, .32, .28, .24, .19, .13, .08, .03],
  [.49, .57, .67, .71, .75, .70, .67, .63, .60, .58, .54, .52, .47, .42, .35, .29, .24, .19, .12, .06],
  [.64, .72, .83, .97, 1.0, .90, .85, .77, .72, .67, .64, .60, .55, .49, .41, .36, .31, .24, .16, .10],
  [.73, .85, 1.0, 1.05, 1.1, 1.05, 1.0, .96, .90, .85, .78, .71, .64, .56, .48, .41, .35, .28, .22, .14],
  [.82, .96, 1.05, 1.13, 1.18, 1.22, 1.16, 1.1, 1.04, .99, .90, .79, .69, .60, .51, .45, .37, .31, .24, .17],
  [.88, 1.0, 1.05, 1.14, 1.18, 1.24, 1.2, 1.14, 1.08, 1.03, .98, .90, .80, .70, .54, .46, .38, .32, .25, .18],
  [.79, .89, 1.0, 1.03, 1.1, 1.16, 1.1, 1.06, 1.03, .99, .90, .80, .72, .65, .54, .46, .38, .32, .25, .18],
  [.63, .66, .71, .75, .80, .85, .88, .91, .90, .86, .80, .73, .66, .60, .50, .44, .36, .30, .24, .16],
  [.49, .50, .50, .50, .50, .54, .64, .72, .74, .71, .68, .64, .60, .55, .47, .40, .34, .27, .20, .13],
  [.33, .33, .35, .37, .40, .45, .52, .56, .58, .58, .57, .55, .52, .48, .42, .36, .31, .24, .17, .10],
  [.23, .23, .24, .26, .28, .30, .34, .42, .46, .47, .47, .46, .44, .42, .39, .34, .29, .23, .16, .08]
];

function drawSide() {
  let s = '<g shape-rendering="crispEdges">';
  for (let r = 0; r < 11; r++) {
    const y = Math.round(1 + 17.6 * r);
    const h = Math.round(1 + 17.6 * (r + 1)) - y;
    for (let c = 0; c < 45; c++) {
      const x = Math.round(144 + 17.6 * c);
      const w = Math.round(144 + 17.6 * (c + 1)) - x;
      s += cell(x, r ? y : 0, w, r ? h : h + 1, lerpAt(sideX, sideLevels[r], c));
    }
  }
  s += '</g>';
  s += gridLines(15, 30, 29.85, 3000, 1000, 'grid-rose');

  [60, 71, 79, 85, 91, 97, 103, 109].forEach(y => {
    s += `<path d="M222 ${y + .5}H3000" stroke="#31656c" stroke-opacity=".85"/>`;
  });
  s += line(217, 126.5, 936, 126.5, 'dash');
  s += line(217, 149.5, 936, 149.5, 'teal');
  s += '<path d="M220 93C260 90 300 91 348 95S430 102 473 105S670 114 830 119L934 122" class="ink"/>';

  // small array silhouette
  s += '<path d="M209 54h16v60h-9V78h-7z" fill="#22627a"/>';
  s += '<path d="M212 58h3M219 57v4M213 66l3 3M218 63h3M213 73h3M219 70v3" stroke="#d23b50" stroke-width="1.500"/>';
  s += '<path d="M220.500 80v33" stroke="#7a1d30" stroke-width="3" stroke-dasharray="2 4"/>';

  s += '<path d="M7 34l10-5v10z" fill="#d2cc3c" stroke="#777720"/><path d="M17 34h10" stroke="#777"/>';
  s += '<text x="23" y="169" class="small">5 ft</text>';
  s += '<path d="M17 174.500h26" class="ink"/><path d="M15 174.500l4-3v6zM45 174.500l-4-3v6z"/>';
  document.getElementById('side-plot').innerHTML = s;
}

// ---- rigging diagram, drawn in feet ----
const FT = 31.05;
const px = d => 197 + d * FT;
const py = z => 21.5 + (16 - z) * FT;

function driver(x, y, cls) {
  return `<path transform="translate(${x} ${y})" d="M-5-5q2 1 3 1h4q1 0 3-1 1 1 0 2-1 1-1 3t1 3q1 1 0 2-2-1-3-1h-4q-1 0-3 1-1-1 0-2 1-1 1-3t-1-3q-1-1 0-2z" class="${cls}"/>`;
}

function drawRig() {
  let s = '<rect x="32.500" y="7.500" width="247" height="358" fill="#fff" stroke="#333"/>';
  for (let d = -5; d <= 2; d++) {
    const x = Math.round(px(d)) + .5;
    s += line(x, 8, x, 365, 'grid-line');
    s += `<text x="${x - (d < 0 ? 1 : 0)}" y="378" text-anchor="middle">${d}</text>`;
  }
  for (let z = 5; z <= 16; z += .5) {
    const y = Math.round(py(z)) + .5;
    s += line(33, y, 279, y, 'grid-line');
    s += line(28, y, 32, y, 'ink');
    s += `<text x="26" y="${y + 3}" text-anchor="end">${z.toFixed(1)}</text>`;
  }
  for (let z = 5; z < 16.5; z += .125) s += line(30, py(z), 32, py(z), 'ink');
  for (let d = -5.3; d < 2.6; d += .1) s += line(px(d), 366, px(d), Math.abs(d - Math.round(d)) < .04 ? 370 : 368, 'ink');
  s += '<text x="155" y="388" text-anchor="middle">D [ft]</text>';
  s += '<text transform="translate(8 190) rotate(-90)" text-anchor="middle">Z [ft]</text>';

  // flying frame
  s += '<rect x="130.500" y="22" width="66" height="7" class="box-fill"/>';
  s += '<path d="M133 25.500h58" stroke="#fff" stroke-width="3" stroke-dasharray="3 2 3 3 2 2"/>';

  // two subs
  [[29, 81.5], [82, 134.5]].forEach(([a, b]) => {
    s += `<rect x="121" y="${a}" width="76" height="${b - a}" class="open-box" stroke-width="1.500"/>`;
    s += driver(150, a + 10, 'driver') + driver(135, a + 35, 'driver') + driver(150, a + 42, 'driver') + driver(179, a + 35, 'driver-open');
    s += `<rect x="183.500" y="${a + 2}" width="7" height="6" rx="1" class="open-box"/>`;
    s += `<rect x="183.500" y="${b - 8}" width="7" height="6" rx="1" class="open-box"/>`;
  });

  // line array boxes
  for (let i = 0; i < 6; i++) {
    const y = 135 + i * 31.5;
    s += `<path d="M150 ${y + 6}L197 ${y}V${y + 31.5}L150 ${y + 25.5}z" class="box-fill" stroke-width="1.500"/>`;
    s += `<rect x="183.500" y="${y + 3}" width="7" height="6" rx="1" class="box-fill"/>`;
    s += `<rect x="183.500" y="${y + 22}" width="7" height="6" rx="1" class="box-fill"/>`;
    s += driver(183, y + 15.5, 'driver');
  }
  s += '<rect x="190.500" y="22" width="6.500" height="302" fill="#a9c8d4" fill-opacity=".8" stroke="#1d6273"/>';

  [55.5, 108.5].forEach(y => { s += line(159, y, 279, y, 'teal'); });
  for (let i = 0; i < 6; i++) {
    const y = Math.round(150 + i * 31.6) + .5;
    s += line(174, y, 279, y, 'teal');
  }

  s += '<path d="M167.500 26v138" stroke="#222" stroke-width="1.500"/><circle cx="167.500" cy="26" r="2.500"/><circle cx="168" cy="165" r="2.200" fill="#7a1028"/>';
  s += '<path d="M166 320l31 4h-31" stroke="#a01c34" fill="none"/>';

  // dimensions
  s += '<path d="M107 22.500h24M107 324.500h58M121.500 135v202M197.500 324v12" class="dash"/>';
  s += '<path d="M111.500 22v137M111.500 187v177M108 28l3.500-6 3.500 6M108 318l3.500 6 3.500-6M108 330l3.500-6 3.500 6M109 363.500h5" class="ink"/>';
  s += '<path d="M122 333.500h24M171 333.500h26M127 330.500l-5 3 5 3M192 330.500l5 3-5 3" class="ink"/>';
  s += '<text transform="translate(114 173) rotate(-90)" text-anchor="middle" class="note">9.74 ft</text>';
  s += '<text x="158" y="336" text-anchor="middle" class="note">2.46 ft</text>';
  s += '<text x="159" y="17" text-anchor="middle" class="note">Weight: 597.13 lbs</text>';
  s += '<text x="117" y="348" class="note">Bottom Angle: 7.5 °</text>';
  s += '<text x="117" y="361" class="note">6.26 ft above ground</text>';
  document.getElementById('rig-plot').innerHTML = s;
}

drawTop();
drawScale();
drawSide();
drawRig();
```
